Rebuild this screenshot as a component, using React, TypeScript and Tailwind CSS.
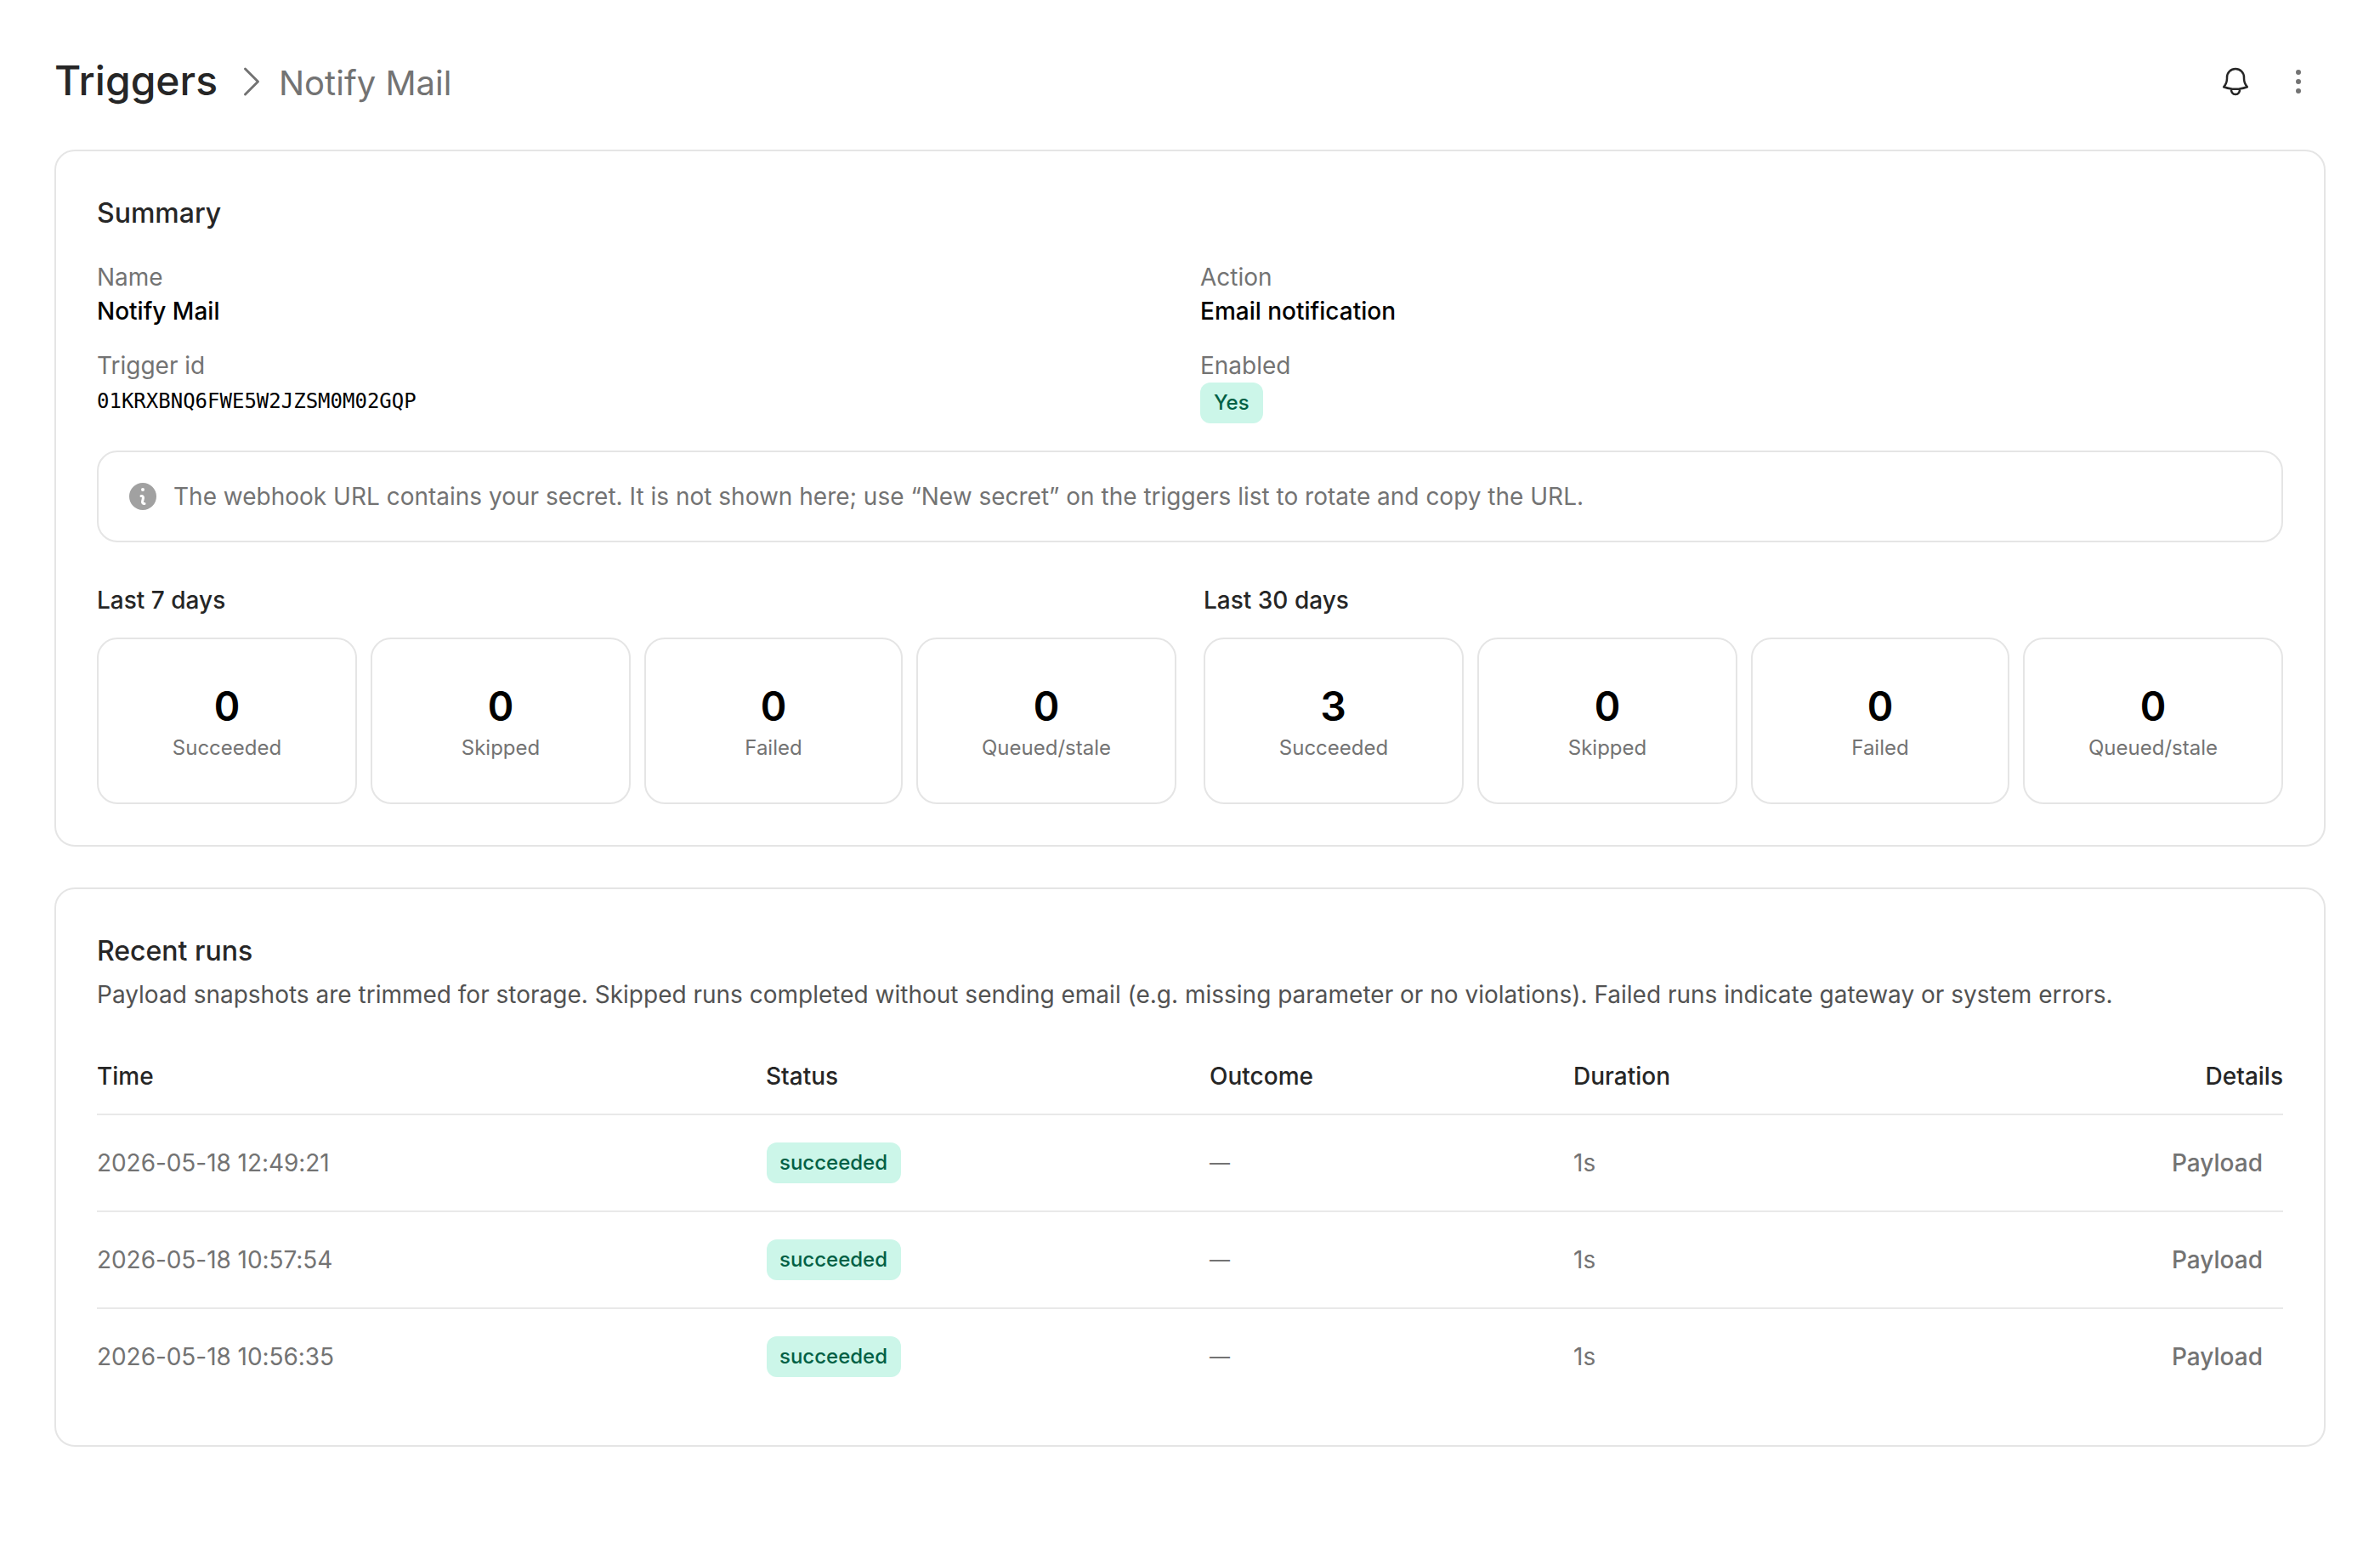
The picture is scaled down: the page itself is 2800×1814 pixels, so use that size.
import React from 'react';

const summary = [
  { label: 'Name', value: 'Notify Mail', kind: 'text' },
  { label: 'Action', value: 'Email notification', kind: 'text' },
  { label: 'Trigger id', value: '01KRXBNQ6FWE5W2JZSM0M02GQP', kind: 'code' },
  { label: 'Enabled', value: 'Yes', kind: 'badge' },
];

const periods = [
  { title: 'Last 7 days', succeeded: 0, skipped: 0, failed: 0, queued: 0 },
  { title: 'Last 30 days', succeeded: 3, skipped: 0, failed: 0, queued: 0 },
];

const runs = [
  { time: '2026-05-18 12:49:21', status: 'succeeded', outcome: '—', duration: '1s' },
  { time: '2026-05-18 10:57:54', status: 'succeeded', outcome: '—', duration: '1s' },
  { time: '2026-05-18 10:56:35', status: 'succeeded', outcome: '—', duration: '1s' },
];

const ChevronRightIcon = () => (
  <svg className="size-12" viewBox="0 0 24 24" fill="none" stroke="currentColor" strokeWidth="1.5" strokeLinecap="round" strokeLinejoin="round">
    <path d="m8.25 4.5 7.5 7.5-7.5 7.5" />
  </svg>
);

const BellIcon = () => (
  <svg className="size-10" viewBox="0 0 24 24" fill="none" stroke="currentColor" strokeWidth="1.5" strokeLinecap="round" strokeLinejoin="round">
    <path d="M14.857 17.082a23.848 23.848 0 0 0 5.454-1.31A8.967 8.967 0 0 1 18 9.75V9A6 6 0 0 0 6 9v.75a8.967 8.967 0 0 1-2.312 6.022c1.733.64 3.56 1.085 5.455 1.31m5.714 0a24.255 24.255 0 0 1-5.714 0m5.714 0a3 3 0 1 1-5.714 0" />
  </svg>
);

const DotsIcon = () => (
  <svg className="size-10" viewBox="0 0 20 20" fill="currentColor">
    <path d="M10 3a1.5 1.5 0 1 1 0 3 1.5 1.5 0 0 1 0-3ZM10 8.5a1.5 1.5 0 1 1 0 3 1.5 1.5 0 0 1 0-3ZM11.5 15.5a1.5 1.5 0 1 0-3 0 1.5 1.5 0 0 0 3 0Z" />
  </svg>
);

const InfoIcon = () => (
  <svg className="size-10 shrink-0 text-neutral-400" viewBox="0 0 20 20" fill="currentColor">
    <path fillRule="evenodd" clipRule="evenodd" d="M18 10a8 8 0 1 1-16 0 8 8 0 0 1 16 0Zm-7-4a1 1 0 1 1-2 0 1 1 0 0 1 2 0ZM9 9a.75.75 0 0 0 0 1.5h.253a.25.25 0 0 1 .244.304l-.459 2.066A1.75 1.75 0 0 0 10.747 15H11a.75.75 0 0 0 0-1.5h-.253a.25.25 0 0 1-.244-.304l.459-2.066A1.75 1.75 0 0 0 9.253 9H9Z" />
  </svg>
);

const Card = ({ children }: { children: React.ReactNode }) => (
  <section className="rounded-3xl border-2 border-neutral-200 bg-white p-12">{children}</section>
);

const Badge = ({ children, className = 'pl-4' }: { children: React.ReactNode; className?: string }) => (
  <span className={`inline-flex items-center rounded-xl bg-emerald-400/20 py-2 pr-4 text-[24px] leading-8 font-medium whitespace-nowrap text-emerald-800 ${className}`}>
    {children}
  </span>
);

const Stat = ({ value, label }: { value: number; label: string }) => (
  <div className="rounded-3xl border-2 border-neutral-200 p-12 text-center">
    <div className="pb-[3px] text-[48px] leading-[61px] font-semibold text-black tabular-nums">{value}</div>
    <div className="text-[24px] leading-8 whitespace-nowrap text-neutral-500">{label}</div>
  </div>
);

export default function App() {
  return (
    <div className="min-h-[1814px] bg-white px-16 pt-16 font-['Inter',sans-serif] text-[28px] leading-10 text-black">
      {/* Header */}
      <header className="mb-12 flex h-16 items-center justify-between">
        <div className="flex h-16 items-center">
          <h1 className="self-start text-[48px] leading-[61px] font-medium text-neutral-800">Triggers</h1>
          <div className="ml-4 flex items-center gap-2 text-neutral-500">
            <ChevronRightIcon />
            <span className="pt-[3px] text-[40px] leading-[49px]">Notify Mail</span>
          </div>
        </div>
        <div className="flex items-center gap-[10px]">
          <button className="flex size-16 items-center justify-center text-neutral-800">
            <BellIcon />
          </button>
          <button className="flex size-16 items-center justify-center text-neutral-500">
            <DotsIcon />
          </button>
        </div>
      </header>

      <div className="space-y-12">
        <Card>
          <h2 className="text-[32px] leading-[49px] font-medium text-neutral-800">Summary</h2>

          <dl className="mt-[31px] grid grid-cols-2 gap-6">
            {summary.map((item) => (
              <div key={item.label}>
                <dt className="text-neutral-500">{item.label}</dt>
                {item.kind === 'text' && <dd className="font-medium">{item.value}</dd>}
                {item.kind === 'code' && (
                  <dd>
                    <span className="font-['DejaVu_Sans_Mono',monospace] text-[24px]">{item.value}</span>
                  </dd>
                )}
                {item.kind === 'badge' && (
                  <dd className="flex">
                    <Badge>{item.value}</Badge>
                  </dd>
                )}
              </div>
            ))}
          </dl>

          <div className="mt-8 flex items-center gap-4 rounded-3xl border-2 border-neutral-200 p-8 text-neutral-500">
            <InfoIcon />
            <p>The webhook URL contains your secret. It is not shown here; use “New secret” on the triggers list to rotate and copy the URL.</p>
          </div>

          <div className="mt-12 grid grid-cols-2 gap-8">
            {periods.map((p) => (
              <div key={p.title}>
                <h3 className="mb-6 font-medium text-neutral-800">{p.title}</h3>
                <div className="grid grid-cols-[306px_306px_304px_306px] gap-4">
                  <Stat value={p.succeeded} label="Succeeded" />
                  <Stat value={p.skipped} label="Skipped" />
                  <Stat value={p.failed} label="Failed" />
                  <Stat value={p.queued} label="Queued/stale" />
                </div>
              </div>
            ))}
          </div>
        </Card>

        <Card>
          <h2 className="text-[32px] leading-[49px] font-medium text-neutral-800">Recent runs</h2>
          <p className="mt-[7px] text-neutral-600">
            Payload snapshots are trimmed for storage. Skipped runs completed without sending email (e.g. missing parameter or no violations). Failed runs indicate gateway or system errors.
          </p>

          <table className="mt-8 w-full table-fixed border-separate border-spacing-0 text-left">
            <colgroup>
              <col className="w-[787px]" />
              <col className="w-[522px]" />
              <col className="w-[428px]" />
              <col className="w-[428px]" />
              <col />
            </colgroup>
            <thead>
              <tr className="text-neutral-800 *:border-b-2 *:border-neutral-800/10 *:py-6 *:font-medium">
                <th>Time</th>
                <th>Status</th>
                <th>Outcome</th>
                <th>Duration</th>
                <th className="text-right">Details</th>
              </tr>
            </thead>
            <tbody>
              {runs.map((run) => (
                <tr key={run.time} className="text-neutral-500 *:border-b-2 *:border-neutral-800/10 *:py-6 last:*:border-b-0">
                  <td className="tracking-[-0.06px]">{run.time}</td>
                  <td>
                    <div className="flex">
                      <Badge className="ml-px pl-[15px]">{run.status}</Badge>
                    </div>
                  </td>
                  <td className="text-[24px]">{run.outcome}</td>
                  <td>{run.duration}</td>
                  <td>
                    <button className="ml-auto flex h-16 items-center px-6 font-medium">Payload</button>
                  </td>
                </tr>
              ))}
            </tbody>
          </table>
        </Card>
      </div>
    </div>
  );
}
